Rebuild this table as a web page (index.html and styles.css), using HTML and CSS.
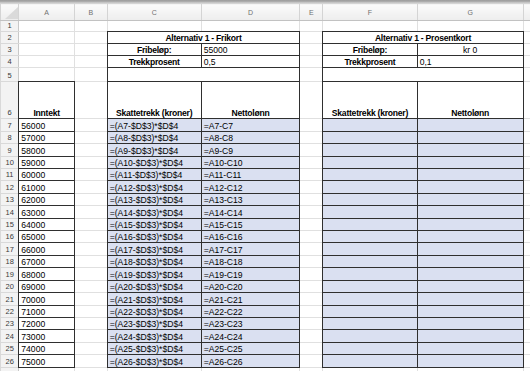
FILE: index.html
```html
<!DOCTYPE html>
<html lang="no">
<head>
<meta charset="utf-8">
<title>Skattekort</title>
<link rel="stylesheet" href="styles.css">
</head>
<body>
<div class="topbar"></div>
<table class="sheet">
<colgroup>
<col class="c-rh"><col class="c-a"><col class="c-b"><col class="c-c"><col class="c-d"><col class="c-e"><col class="c-f"><col class="c-g"><col class="c-h">
</colgroup>
<tr class="hd">
<th class="corner"><svg width="18" height="15" viewBox="0 0 18 15"><polygon points="4,14 17,14 17,2" fill="#dadada"/></svg></th>
<th>A</th><th>B</th><th>C</th><th>D</th><th>E</th><th>F</th><th>G</th><th></th>
</tr>
<tr class="r1"><th class="rn">1</th><td></td><td></td><td></td><td></td><td></td><td></td><td></td><td></td></tr>
<tr class="r2"><th class="rn">2</th><td></td><td></td><td colspan="2" class="bx bold ctr">Alternativ 1 - Frikort</td><td></td><td colspan="2" class="bx bold ctr">Alternativ 1 - Prosentkort</td><td></td></tr>
<tr class="r3"><th class="rn">3</th><td></td><td></td><td class="bx bold ctr">Fribeløp:</td><td class="bx">55000</td><td></td><td class="bx bold ctr">Fribeløp:</td><td class="bx ctr">kr 0</td><td></td></tr>
<tr class="r4"><th class="rn">4</th><td></td><td></td><td class="bx bold ctr">Trekkprosent</td><td class="bx">0,5</td><td></td><td class="bx bold ctr">Trekkprosent</td><td class="bx">0,1</td><td></td></tr>
<tr class="r5"><th class="rn">5</th><td></td><td></td><td colspan="2" class="bx"></td><td></td><td colspan="2" class="bx"></td><td></td></tr>
<tr class="r6"><th class="rn">6</th><td class="bx bold ctr">Inntekt</td><td></td><td class="bx bold ctr">Skattetrekk (kroner)</td><td class="bx bold ctr">Nettolønn</td><td></td><td class="bx bold ctr">Skattetrekk (kroner)</td><td class="bx bold ctr">Nettolønn</td><td></td></tr>
<tr class="rd"><th class="rn">7</th><td class="bx">56000</td><td></td><td class="bx fill">=(A7-$D$3)*$D$4</td><td class="bx fill">=A7-C7</td><td></td><td class="bx fill"></td><td class="bx fill"></td><td></td></tr>
<tr class="rd"><th class="rn">8</th><td class="bx">57000</td><td></td><td class="bx fill">=(A8-$D$3)*$D$4</td><td class="bx fill">=A8-C8</td><td></td><td class="bx fill"></td><td class="bx fill"></td><td></td></tr>
<tr class="rd"><th class="rn">9</th><td class="bx">58000</td><td></td><td class="bx fill">=(A9-$D$3)*$D$4</td><td class="bx fill">=A9-C9</td><td></td><td class="bx fill"></td><td class="bx fill"></td><td></td></tr>
<tr class="rd"><th class="rn">10</th><td class="bx">59000</td><td></td><td class="bx fill">=(A10-$D$3)*$D$4</td><td class="bx fill">=A10-C10</td><td></td><td class="bx fill"></td><td class="bx fill"></td><td></td></tr>
<tr class="rd"><th class="rn">11</th><td class="bx">60000</td><td></td><td class="bx fill">=(A11-$D$3)*$D$4</td><td class="bx fill">=A11-C11</td><td></td><td class="bx fill"></td><td class="bx fill"></td><td></td></tr>
<tr class="rd"><th class="rn">12</th><td class="bx">61000</td><td></td><td class="bx fill">=(A12-$D$3)*$D$4</td><td class="bx fill">=A12-C12</td><td></td><td class="bx fill"></td><td class="bx fill"></td><td></td></tr>
<tr class="rd"><th class="rn">13</th><td class="bx">62000</td><td></td><td class="bx fill">=(A13-$D$3)*$D$4</td><td class="bx fill">=A13-C13</td><td></td><td class="bx fill"></td><td class="bx fill"></td><td></td></tr>
<tr class="rd"><th class="rn">14</th><td class="bx">63000</td><td></td><td class="bx fill">=(A14-$D$3)*$D$4</td><td class="bx fill">=A14-C14</td><td></td><td class="bx fill"></td><td class="bx fill"></td><td></td></tr>
<tr class="rd"><th class="rn">15</th><td class="bx">64000</td><td></td><td class="bx fill">=(A15-$D$3)*$D$4</td><td class="bx fill">=A15-C15</td><td></td><td class="bx fill"></td><td class="bx fill"></td><td></td></tr>
<tr class="rd"><th class="rn">16</th><td class="bx">65000</td><td></td><td class="bx fill">=(A16-$D$3)*$D$4</td><td class="bx fill">=A16-C16</td><td></td><td class="bx fill"></td><td class="bx fill"></td><td></td></tr>
<tr class="rd"><th class="rn">17</th><td class="bx">66000</td><td></td><td class="bx fill">=(A17-$D$3)*$D$4</td><td class="bx fill">=A17-C17</td><td></td><td class="bx fill"></td><td class="bx fill"></td><td></td></tr>
<tr class="rd"><th class="rn">18</th><td class="bx">67000</td><td></td><td class="bx fill">=(A18-$D$3)*$D$4</td><td class="bx fill">=A18-C18</td><td></td><td class="bx fill"></td><td class="bx fill"></td><td></td></tr>
<tr class="rd"><th class="rn">19</th><td class="bx">68000</td><td></td><td class="bx fill">=(A19-$D$3)*$D$4</td><td class="bx fill">=A19-C19</td><td></td><td class="bx fill"></td><td class="bx fill"></td><td></td></tr>
<tr class="rd"><th class="rn">20</th><td class="bx">69000</td><td></td><td class="bx fill">=(A20-$D$3)*$D$4</td><td class="bx fill">=A20-C20</td><td></td><td class="bx fill"></td><td class="bx fill"></td><td></td></tr>
<tr class="rd"><th class="rn">21</th><td class="bx">70000</td><td></td><td class="bx fill">=(A21-$D$3)*$D$4</td><td class="bx fill">=A21-C21</td><td></td><td class="bx fill"></td><td class="bx fill"></td><td></td></tr>
<tr class="rd"><th class="rn">22</th><td class="bx">71000</td><td></td><td class="bx fill">=(A22-$D$3)*$D$4</td><td class="bx fill">=A22-C22</td><td></td><td class="bx fill"></td><td class="bx fill"></td><td></td></tr>
<tr class="rd"><th class="rn">23</th><td class="bx">72000</td><td></td><td class="bx fill">=(A23-$D$3)*$D$4</td><td class="bx fill">=A23-C23</td><td></td><td class="bx fill"></td><td class="bx fill"></td><td></td></tr>
<tr class="rd"><th class="rn">24</th><td class="bx">73000</td><td></td><td class="bx fill">=(A24-$D$3)*$D$4</td><td class="bx fill">=A24-C24</td><td></td><td class="bx fill"></td><td class="bx fill"></td><td></td></tr>
<tr class="rd"><th class="rn">25</th><td class="bx">74000</td><td></td><td class="bx fill">=(A25-$D$3)*$D$4</td><td class="bx fill">=A25-C25</td><td></td><td class="bx fill"></td><td class="bx fill"></td><td></td></tr>
<tr class="rd"><th class="rn">26</th><td class="bx">75000</td><td></td><td class="bx fill">=(A26-$D$3)*$D$4</td><td class="bx fill">=A26-C26</td><td></td><td class="bx fill"></td><td class="bx fill"></td><td></td></tr>
<tr class="rd"><th class="rn"></th><td></td><td></td><td></td><td></td><td></td><td></td><td></td><td></td></tr>
</table>
</body>
</html>
```
FILE: styles.css
```css
html, body {
  margin: 0;
  padding: 0;
  background: #fff;
  overflow: hidden;
}
body {
  width: 530px;
  height: 371px;
  font-family: "Liberation Sans", Arial, sans-serif;
}
.topbar {
  height: 3px;
  background: linear-gradient(#9a9a9a, #b2b2b2 66%, #d6d6d6);
}
.sheet {
  border-collapse: collapse;
  table-layout: fixed;
  width: 530px;
  font-size: 8.6px;
  color: #000;
}
.c-rh { width: 18.3px; }
.c-a { width: 55.7px; }
.c-b { width: 32.7px; }
.c-c { width: 94px; }
.c-d { width: 98.6px; }
.c-e { width: 23px; }
.c-f { width: 94.4px; }
.c-g { width: 106px; }
.c-h { width: 7.3px; }

.sheet td {
  border: 1px solid #e0e0e0;
  padding: 0 2px;
  vertical-align: bottom;
  white-space: nowrap;
  overflow: hidden;
  line-height: 10px;
}
.sheet th {
  font-weight: normal;
  padding: 0;
}
.hd th {
  height: 16px;
  background: linear-gradient(#fbfbfb, #ededed);
  border: 1px solid #d4d4d4;
  border-bottom-color: #c2c2c2;
  color: #707070;
  font-size: 7px;
  vertical-align: middle;
  text-align: center;
}
.hd th.corner {
  vertical-align: bottom;
  line-height: 0;
}
.sheet th.rn {
  background: #f3f3f3;
  border: 1px solid #d9d9d9;
  border-right-color: #c8c8c8;
  color: #3a3a3a;
  font-size: 7.5px;
  line-height: 10px;
  text-align: center;
  vertical-align: bottom;
}
.r1 { height: 11.3px; }
.r2 { height: 12px; }
.r3 { height: 11.7px; }
.r4 { height: 11.7px; }
.r5 { height: 14.3px; }
.r6 { height: 37.3px; }
.rd { height: 12.43px; }

.sheet td.bx {
  border: 1px double #2f2f2f;
}
.fill {
  background: #dae0f1;
}
.bold {
  font-weight: bold;
  letter-spacing: -0.25px;
}
.ctr {
  text-align: center;
}
```
